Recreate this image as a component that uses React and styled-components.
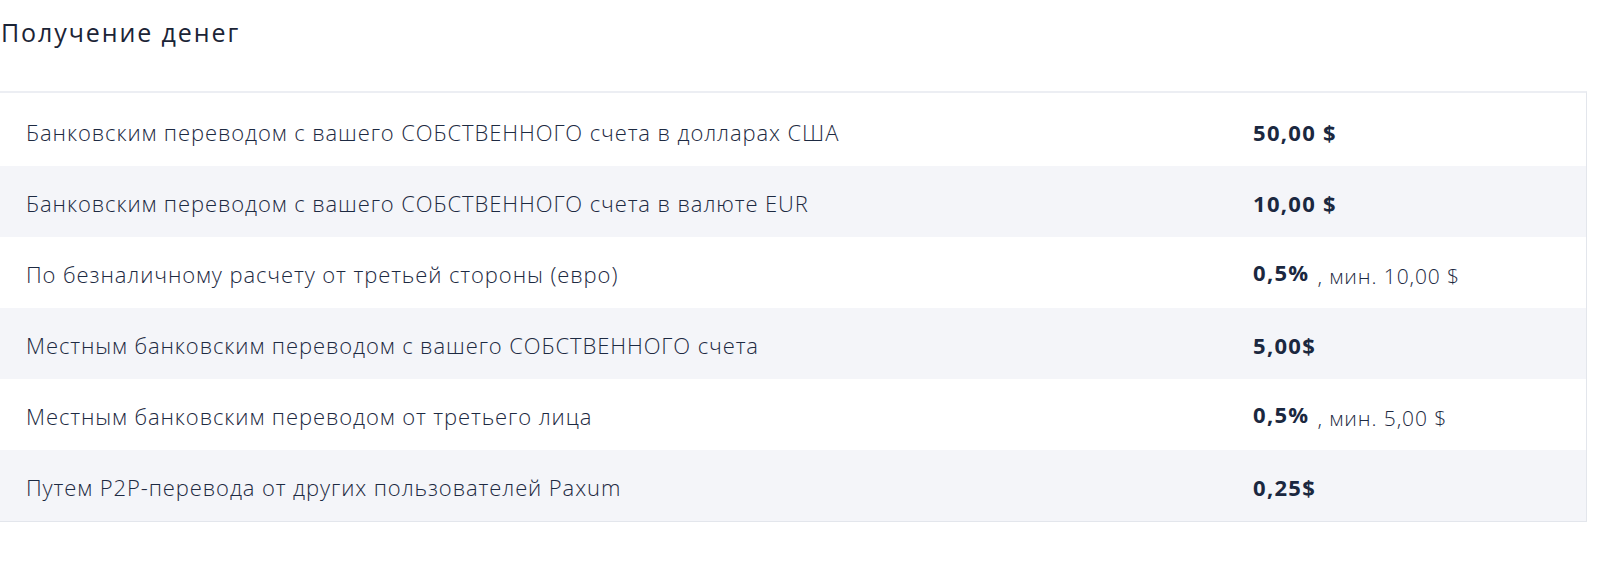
import styled, { createGlobalStyle } from "styled-components";

const GlobalStyle = createGlobalStyle`
  body {
    margin: 0;
    background: #fff;
    font-family: "Open Sans", "Liberation Sans", sans-serif;
    color: #1d2a42;
  }
`;

const rows = [
  { label: "Банковским переводом с вашего СОБСТВЕННОГО счета в долларах США", value: "50,00 $" },
  { label: "Банковским переводом с вашего СОБСТВЕННОГО счета в валюте EUR", value: "10,00 $" },
  { label: "По безналичному расчету от третьей стороны (евро)", value: "0,5%", note: ", мин. 10,00 $" },
  { label: "Местным банковским переводом с вашего СОБСТВЕННОГО счета", value: "5,00$" },
  { label: "Местным банковским переводом от третьего лица", value: "0,5%", note: ", мин. 5,00 $" },
  { label: "Путем P2P-перевода от других пользователей Paxum", value: "0,25$" },
];

function App() {
  return (
    <Page>
      <GlobalStyle />
      <Title>Получение денег</Title>
      <Table>
        {rows.map((r, i) => (
          <Row key={i} $shaded={i % 2 === 1} $first={i === 0}>
            <Label>{r.label}</Label>
            <Value>
              <Amount $raised={!!r.note}>{r.value}</Amount>
              {r.note && <Note>{r.note}</Note>}
            </Value>
          </Row>
        ))}
      </Table>
    </Page>
  );
}

export default App;

const Page = styled.div`
  width: 1600px;
  height: 561px;
  padding-top: 16px;
  box-sizing: border-box;
`;

const Title = styled.h2`
  margin: 0 0 0 1px;
  font-size: 25px;
  font-weight: 400;
  line-height: 32px;
  letter-spacing: 1.9px;
  color: #1b2436;
`;

const Table = styled.div`
  margin-top: 43px;
  width: 1586px;
  border-top: 2px solid #eceef3;
  border-right: 1px solid #e3e6ec;
  border-bottom: 1px solid #e3e6ec;
`;

const Row = styled.div`
  display: flex;
  align-items: center;
  height: ${(p) => (p.$first ? "73px" : "71px")};
  padding: ${(p) => (p.$first ? "4px" : "2px")} 0 0 26px;
  box-sizing: border-box;
  background: ${(p) => (p.$shaded ? "#f4f5f9" : "#fff")};
`;

const Label = styled.div`
  width: 1227px;
  font-size: 22px;
  font-weight: 300;
  letter-spacing: 0.9px;
  color: #1d2a42;
`;

const Value = styled.div`
  white-space: nowrap;
`;

const Amount = styled.span`
  font-size: 22px;
  font-weight: 700;
  letter-spacing: 1.3px;
  color: #1b2840;
  vertical-align: ${(p) => (p.$raised ? "3px" : "baseline")};
`;

const Note = styled.span`
  margin-left: 8px;
  font-size: 21px;
  font-weight: 300;
  letter-spacing: 0.9px;
  color: #1d2a42;
`;
